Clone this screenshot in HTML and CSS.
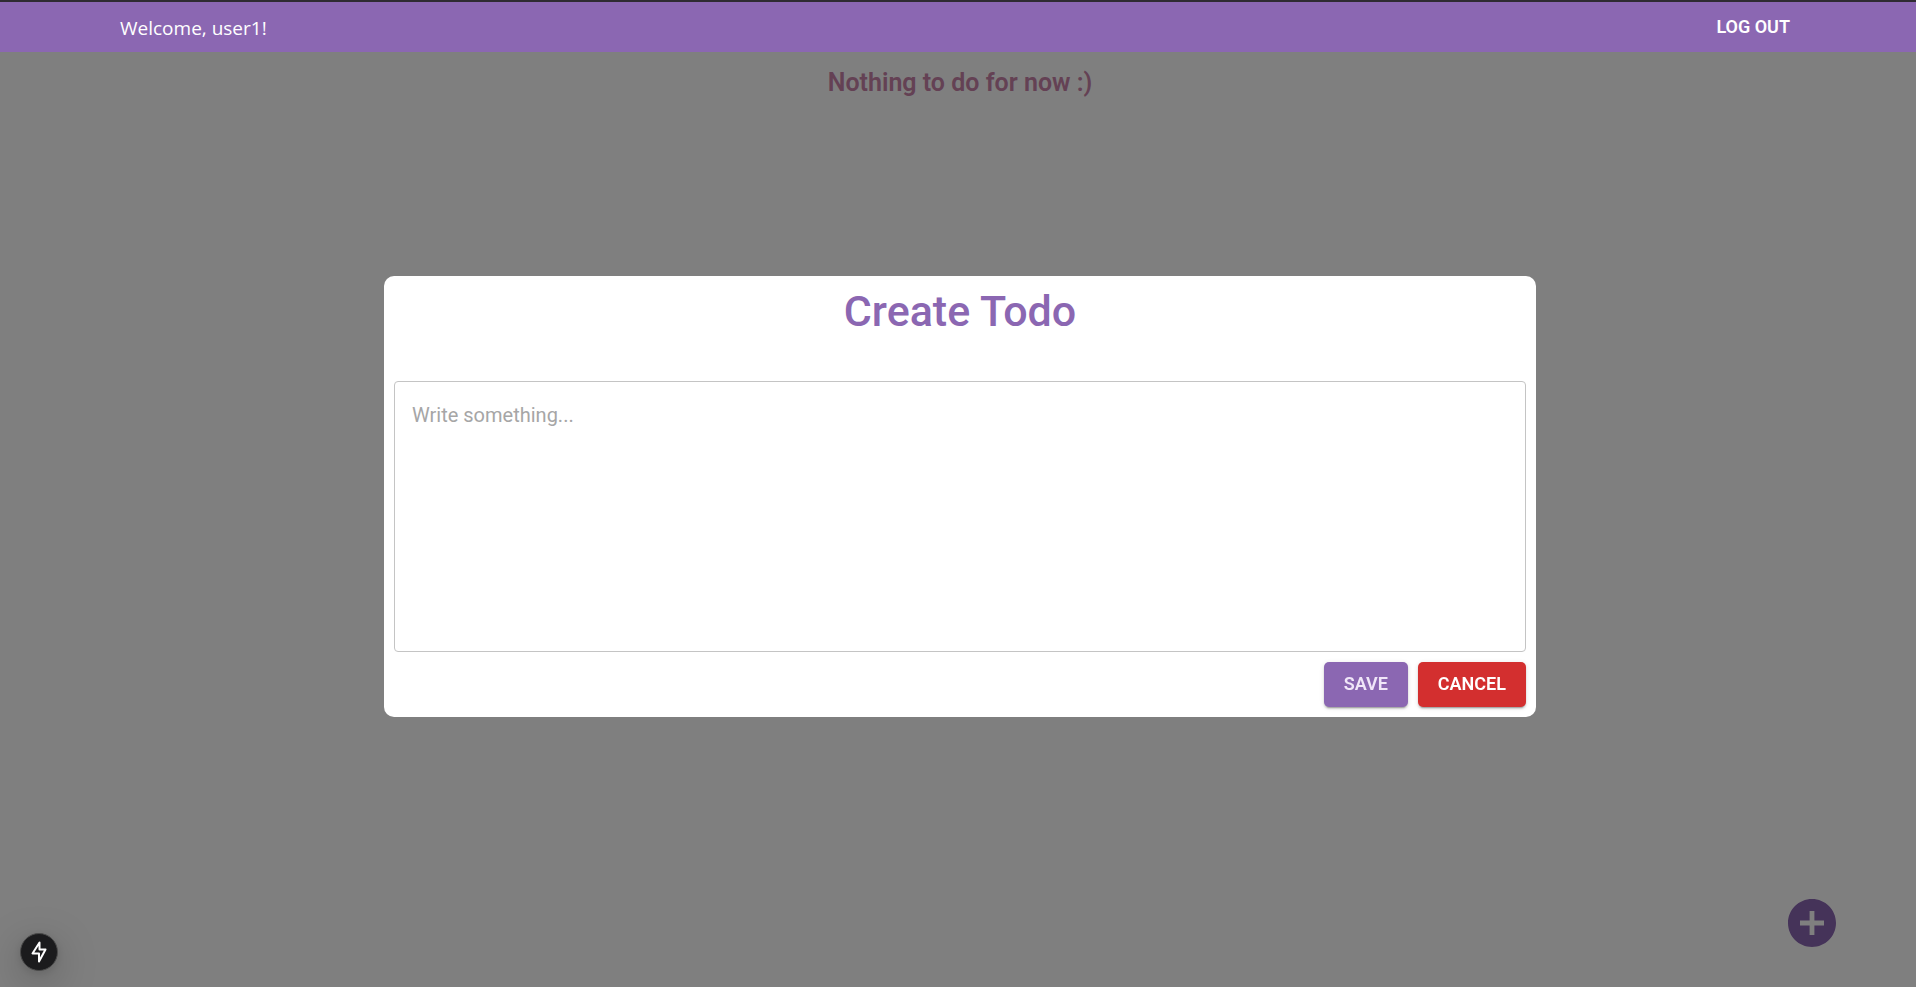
FILE: index.html
```html
<!DOCTYPE html>
<html lang="en">
<head>
<meta charset="utf-8">
<title>Todos</title>
<link rel="stylesheet" href="styles.css">
</head>
<body>
<header class="topbar">
  <span class="welcome">Welcome, user1!</span>
  <button class="logout" type="button">Log out</button>
</header>
<main class="content">
  <h2 class="empty">Nothing to do for now :)</h2>
</main>
<button class="add" type="button" aria-label="Add todo">
  <svg viewBox="2 2 20 20"><path d="M12 2C6.480 2 2 6.480 2 12s4.480 10 10 10 10-4.480 10-10S17.520 2 12 2zm5 11h-4v4h-2v-4H7v-2h4V7h2v4h4v2z"/></svg>
</button>
<div class="backdrop">
  <form class="modal" role="dialog" aria-labelledby="modal-title">
    <h1 class="title" id="modal-title">Create Todo</h1>
    <textarea class="field" placeholder="Write something..." aria-label="Todo text"></textarea>
    <div class="actions">
      <button class="btn save" type="button">Save</button>
      <button class="btn cancel" type="button">Cancel</button>
    </div>
  </form>
</div>
<button class="devtool" type="button" aria-label="Static route">
  <svg viewBox="0 0 16 22"><path d="M8.500 1.500L1.500 12.500H8V20.500L14.500 8.500H8.500Z"/></svg>
</button>
</body>
</html>
```
FILE: styles.css
```css
* {
  box-sizing: border-box;
}

body {
  margin: 0;
  min-height: 100vh;
  background: #fff;
  font-family: Roboto, sans-serif;
}

button {
  font-family: inherit;
  cursor: pointer;
}

.topbar {
  position: relative;
  z-index: 3;
  display: flex;
  align-items: center;
  justify-content: space-between;
  height: 52px;
  padding: 0 120px;
  border-top: 2px solid #2f2b32;
  background: #8b67b2;
  color: #fff;
}

.welcome {
  padding-top: 2px;
  font: 19px/28px "Open Sans", "Noto Sans", sans-serif;
}

.logout {
  padding: 0 6px;
  border: 0;
  background: none;
  color: #fff;
  font-size: 18px;
  font-weight: 600;
  line-height: 28px;
  text-transform: uppercase;
}

.content {
  padding: 14px 0 0 4px;
}

.empty {
  margin: 0;
  color: #c882a8;
  font-size: 25px;
  font-weight: 600;
  line-height: 34px;
  text-align: center;
}

.backdrop {
  position: fixed;
  inset: 0 -4px 0 0;
  z-index: 2;
  display: grid;
  place-items: center;
  padding-top: 6px;
  background: rgba(0, 0, 0, 0.5);
}

.modal {
  display: flex;
  flex-direction: column;
  gap: 10px;
  width: 60%;
  padding: 10px;
  border-radius: 10px;
  background: #fff;
}

.title {
  margin: 0 0 35px;
  color: #8b67b2;
  font-size: 43px;
  font-weight: 500;
  line-height: 50px;
  text-align: center;
}

.field {
  display: block;
  width: 100%;
  height: 271px;
  padding: 19px 17px;
  border: 1px solid #c4c4c4;
  border-radius: 4px;
  background: #fff;
  outline: 0;
  resize: none;
  font: 20px/28px Roboto, sans-serif;
}

.field::placeholder {
  color: #a6a6a6;
}

.actions {
  display: flex;
  justify-content: flex-end;
  gap: 10px;
}

.btn {
  padding: 8px 20px 9px;
  border: 0;
  border-radius: 5px;
  color: #fff;
  font-size: 18px;
  font-weight: 600;
  line-height: 28px;
  text-transform: uppercase;
  box-shadow: 0 3px 1px -2px rgba(0, 0, 0, 0.2), 0 2px 2px rgba(0, 0, 0, 0.14), 0 1px 5px rgba(0, 0, 0, 0.12);
}

.save {
  background: #8b67b2;
  color: #f0e6f8;
}

.cancel {
  background: #d32f2f;
}

.add {
  position: fixed;
  right: 80px;
  bottom: 40px;
  width: 48px;
  height: 48px;
  padding: 0;
  border: 0;
  background: none;
}

.add svg {
  display: block;
  fill: #8b67b2;
}

.devtool {
  position: fixed;
  bottom: 16px;
  left: 20px;
  z-index: 4;
  display: grid;
  place-items: center;
  width: 38px;
  height: 38px;
  padding: 0;
  border: 1px solid #4a4a4a;
  border-radius: 50%;
  background: #1b1b1d;
  box-shadow: 0 11px 40px rgba(0, 0, 0, 0.25), 0 2px 10px rgba(0, 0, 0, 0.12);
}

.devtool svg {
  width: 16px;
  height: 22px;
  fill: none;
  stroke: #fff;
  stroke-width: 2;
  stroke-linejoin: round;
}
```
